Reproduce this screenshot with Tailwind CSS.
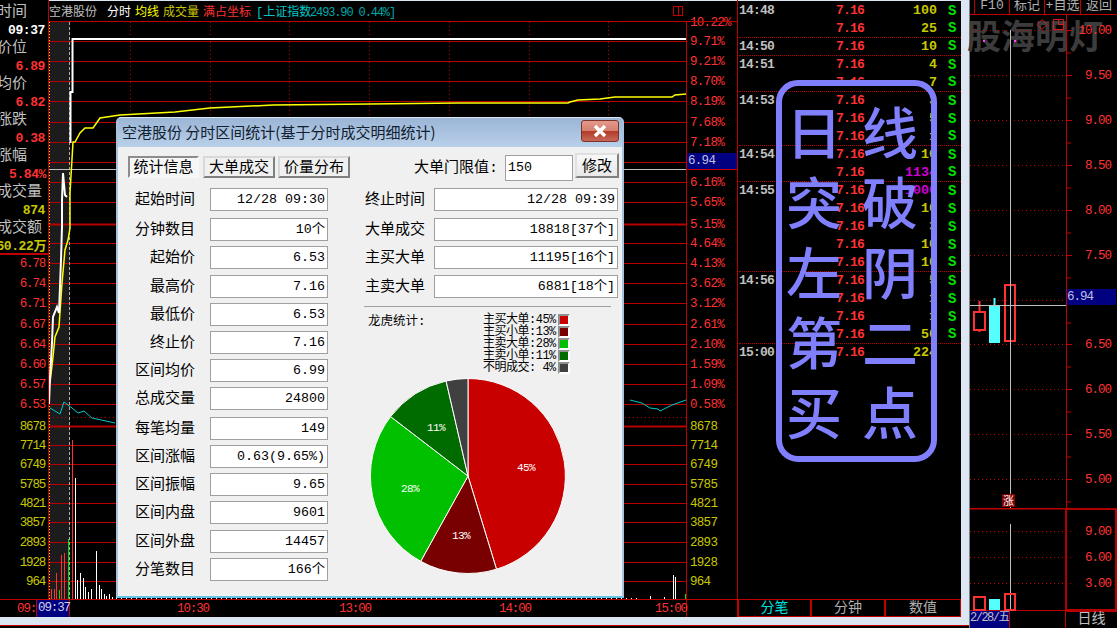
<!DOCTYPE html>
<html lang="zh">
<head>
  <meta charset="UTF-8" />
  <title>空港股份 分时区间统计</title>
  <script src="https://cdn.jsdelivr.net/npm/@tailwindcss/browser@4"></script>
</head>
<body class="relative w-[1117px] h-[628px] overflow-hidden flex bg-[#dce6f2] [font-family:'Liberation_Mono','Noto_Sans_CJK_SC',monospace]">

  <!-- left part: intraday chart + trade list -->
  <div class="w-[969px] h-[628px] flex flex-col">
    <div class="flex h-[617px] w-[961px]">
      <div class="grid grid-cols-[49px_637px_51px] grid-rows-[22px_577px_18px] w-[737px] bg-black">
        <!-- stats column -->
        <div class="row-span-2 border-r border-[#c00000] flex flex-col overflow-hidden">
          <div class="h-[255px] pt-[4px] border-b-2 border-[#c00000] text-[15px] leading-[18px] overflow-hidden">
            <div class="-ml-[3px] h-[18px] whitespace-nowrap text-[#c0c0c0]">时间</div>
            <div class="h-[18px] text-right pr-[3px] text-[13px] font-bold tracking-[-0.4px] text-white">09:37</div>
            <div class="-ml-[3px] h-[18px] whitespace-nowrap text-[#c0c0c0]">价位</div>
            <div class="h-[18px] text-right pr-[3px] text-[13px] font-bold tracking-[-0.4px] text-[#ff3232]">6.89</div>
            <div class="-ml-[3px] h-[18px] whitespace-nowrap text-[#c0c0c0]">均价</div>
            <div class="h-[18px] text-right pr-[3px] text-[13px] font-bold tracking-[-0.4px] text-[#ff3232]">6.82</div>
            <div class="-ml-[3px] h-[18px] whitespace-nowrap text-[#c0c0c0]">涨跌</div>
            <div class="h-[18px] text-right pr-[3px] text-[13px] font-bold tracking-[-0.4px] text-[#ff3232]">0.38</div>
            <div class="-ml-[3px] h-[18px] whitespace-nowrap text-[#c0c0c0]">涨幅</div>
            <div class="h-[18px] text-right pr-[2px] text-[13px] font-bold tracking-[-0.4px] text-[#ff3232]">5.84%</div>
            <div class="-ml-[3px] h-[18px] whitespace-nowrap text-[#c0c0c0]">成交量</div>
            <div class="h-[18px] text-right pr-[3px] text-[13px] font-bold tracking-[-0.4px] text-[#c8c800]">874</div>
            <div class="-ml-[3px] h-[18px] whitespace-nowrap text-[#c0c0c0]">成交额</div>
            <div class="h-[18px] flex justify-end pr-[2px] text-[13px] font-bold tracking-[-0.4px] text-[#c8c800] whitespace-nowrap">60.22万</div>
          </div>
          <svg id="leftAxis" class="block" width="48" height="344" viewBox="0 255 48 344"></svg>
        </div>

        <!-- info strip -->
        <div class="col-span-2 flex items-center border-t border-t-[#dce6f2] border-b border-b-[#c00000] pt-[3px] text-[12px] whitespace-nowrap relative">
          <span class="w-[58px] text-[#c0c0c0]">空港股份</span>
          <span class="w-[28px] text-white">分时</span>
          <span class="w-[28px] text-[#ffff00]">均线</span>
          <span class="w-[40px] text-[#c8c800]">成交量</span>
          <span class="w-[53px] text-[#ff3232]">满占坐标</span>
          <span class="w-[54px] text-[#00c8c8]">[上证指数</span>
          <span class="text-[#00a8a8] tracking-[-1.13px]">2493.90 0.44%]</span>
          <span class="ml-auto mr-[54px] -mt-[3px] w-[10px] h-[10px] border border-[#c00000] flex justify-center"><span class="w-px h-full bg-[#c00000]"></span></span>
        </div>

        <!-- price / volume canvas -->
        <svg id="chart" class="block" width="637" height="577" viewBox="49 22 637 577"></svg>
        <svg id="rightAxis" class="block overflow-visible" width="51" height="577" viewBox="686 22 51 577"></svg>

        <!-- time axis -->
        <svg class="col-span-3 block" width="737" height="18" viewBox="0 599 737 18" font-size="12.5" letter-spacing="-1.1" fill="#ff3232">
          <line x1="0" y1="599.5" x2="737" y2="599.5" stroke="#c00000" />
          <rect x="37" y="600" width="33" height="17" fill="#000080" />
          <line x1="36.5" y1="600" x2="36.5" y2="617" stroke="#c00000" />
          <line x1="69.5" y1="600" x2="69.5" y2="617" stroke="#c00000" />
          <line x1="686.5" y1="600" x2="686.5" y2="617" stroke="#c00000" />
          <text x="17" y="612">09:</text>
          <text x="38" y="611" fill="#d0d0e8">09:37</text>
          <text x="177" y="612">10:30</text>
          <text x="339" y="612">13:00</text>
          <text x="499" y="612">14:00</text>
          <text x="655" y="612">15:00</text>
        </svg>
      </div>

      <!-- trade list -->
      <div class="w-[224px] flex flex-col bg-black border-l border-[#c00000]">
        <div id="trades" class="h-[599px] pt-px pl-px border-t border-t-[#dce6f2] overflow-hidden"></div>
        <div class="h-[18px] flex text-[14px] leading-[16px] text-center border border-[#c00000]">
          <div class="w-[73px] border-r-2 border-[#c00000] text-[#00e0e0]">分笔</div>
          <div class="w-[74px] border-r-2 border-[#c00000] text-[#b0b0b0]">分钟</div>
          <div class="flex-1 text-[#b0b0b0]">数值</div>
        </div>
      </div>
    </div>
    <div class="mt-[8px] h-[3px] bg-black border-t border-[#c00000]"></div>
  </div>

  <!-- daily K panel -->
  <div class="relative w-[148px] h-[628px] bg-black border-l border-[#808080] flex flex-col">
    <div class="absolute left-[-3px] top-[12px] text-[34px] leading-[46px] font-bold text-[#3c3c3c] whitespace-nowrap font-['Noto_Sans_CJK_SC',sans-serif]">股海明灯</div>
    <div class="h-[15px] flex border-b border-[#c00000] text-[13px] leading-[11px] text-[#b0b0b0] text-center overflow-hidden">
      <div class="w-[5px] border-r border-[#c00000]"></div>
      <div class="w-[35px] border-r border-[#c00000]">F10</div>
      <div class="w-[35px] border-r border-[#c00000]">标记</div>
      <div class="w-[36px] border-r border-[#c00000] whitespace-nowrap">+自选</div>
      <div class="flex-1">返回</div>
    </div>
    <svg id="kline" class="relative block" width="147" height="493" viewBox="970 15 147 493"></svg>
    <svg class="block" width="147" height="103" viewBox="970 508 147 103" font-size="12.5" letter-spacing="-1" fill="#ff3232">
      <line x1="970" y1="508.5" x2="1117" y2="508.5" stroke="#c00000" stroke-width="2" />
      <rect x="1066" y="509" width="50" height="101" fill="none" stroke="#b00000" stroke-width="2" />
      <line x1="970" y1="610.5" x2="1066" y2="610.5" stroke="#c00000" />
      <path d="M970 531.5H1072M970 557.5H1072M970 583.5H1072" stroke="#c00000" stroke-dasharray="1 3" />
      <text x="1111" y="535" text-anchor="end">9.00</text>
      <text x="1111" y="561" text-anchor="end">6.00</text>
      <text x="1111" y="587" text-anchor="end">3.00</text>
      <line x1="1010.5" y1="524" x2="1010.5" y2="610" stroke="#c0c0c0" />
      <rect x="974" y="597" width="11" height="13" fill="none" stroke="#ff3232" stroke-width="2" />
      <rect x="989" y="599" width="11" height="11" fill="#55ffff" />
      <rect x="1005" y="594" width="10" height="16" fill="none" stroke="#ff3232" stroke-width="2" />
    </svg>
    <div class="h-[17px] flex text-[13px] leading-[15px] text-[#c0c0c0] whitespace-nowrap">
      <div class="w-[40px] bg-[#000080] border-r border-[#c00000] text-[12px] tracking-[-1.5px] overflow-hidden">2/28/五</div>
      <div class="w-[56px] border-r border-[#c00000]"></div>
      <div class="flex-1 text-center text-[14px] border-t border-[#c00000]">日线</div>
    </div>
  </div>

  <!-- hand-drawn note on top of the screen -->
  <div class="absolute left-[776px] top-[80px] w-[161px] h-[382px] border-[6px] border-[#8080ff] rounded-[22px] pt-[9px] pl-[2px] grid grid-cols-[60px_60px] grid-rows-[repeat(5,70px)] gap-x-[16px] text-[#8080ff] text-[56px] leading-[70px] text-center font-medium font-['Noto_Sans_CJK_SC',sans-serif]">
    <span>日</span><span>线</span>
    <span>突</span><span>破</span>
    <span>左</span><span>阴</span>
    <span>第</span><span>二</span>
    <span>买</span><span>点</span>
  </div>

  <!-- stats dialog -->
  <div class="absolute left-[116px] top-[117px] w-[508px] h-[481px] flex flex-col rounded-t-[5px] border-x-2 border-b-2 border-t border-x-[#a9c3de] border-b-[#62c4e6] border-t-[#d8e6f2] bg-[#f0f0f0] text-[15px] text-black">
    <div class="h-[29px] shrink-0 flex items-center justify-between pl-[4px] pr-[3px] bg-[linear-gradient(#9bb5d6,#b9d0e9)] text-[#10202f] font-['Noto_Sans_CJK_SC',sans-serif]">
      <span class="whitespace-nowrap">空港股份 分时区间统计(基于分时成交明细统计)</span>
      <span class="w-[38px] h-[22px] -mt-[3px] flex items-center justify-center rounded-[3px] border border-[#7d3328] bg-[linear-gradient(#e39a8c_0%,#d4816f_48%,#b23c28_52%,#c8685a_100%)]">
        <svg width="16" height="14" viewBox="0 0 16 14"><path d="M3 2l10 10M13 2L3 12" stroke="#fff" stroke-width="3.4" /></svg>
      </span>
    </div>

    <div class="flex-1 flex flex-col bg-[#f0f0f0]">
      <!-- tabs + threshold -->
      <div class="h-[28px] mt-[6px] flex pl-[10px] pr-[3px]">
        <div class="w-[71px] h-[22px] mt-[3px] pt-[4px] flex items-center justify-center border-2 border-[#f8f8f8] border-t-[#8c8c8c] border-l-[#8c8c8c] bg-[#f6f6f6]">统计信息</div>
        <div class="w-[72px] h-[22px] mt-[3px] pt-[4px] ml-[4px] flex items-center justify-center border-2 border-[#d8d8d8] border-r-[#808080] border-b-[#808080] bg-[#f0f0f0]">大单成交</div>
        <div class="w-[72px] h-[22px] mt-[3px] pt-[4px] ml-[3px] flex items-center justify-center border-2 border-[#d8d8d8] border-r-[#808080] border-b-[#808080] bg-[#f0f0f0]">价量分布</div>
        <div class="ml-auto h-[26px] mt-[2px] pt-[3px] flex items-center whitespace-nowrap">大单门限值:</div>
        <div class="w-[68px] h-[26px] mt-[2px] ml-[7px] px-[2px] flex items-center border border-[#a0a0a0] bg-white text-[13.33px]">150</div>
        <div class="w-[44px] h-[25px] ml-[2px] pt-[5px] flex items-center justify-center border-2 border-[#e0e0e0] border-r-[#808080] border-b-[#808080] bg-[linear-gradient(#f8f8f8,#e8e8e8)]">修改</div>
      </div>

      <div class="flex mt-[7px]">
        <!-- left fields -->
        <div class="w-[210px] flex flex-col gap-[5px] text-right">
          <div class="flex items-center h-[23px]"><span class="w-[77px] mt-[4px]">起始时间</span><span class="w-[118px] h-[23px] ml-[15px] pr-[2px] border border-[#a0a0a0] bg-white text-[13.33px] leading-[21px] whitespace-nowrap">12/28 09:30</span></div>
          <div class="flex items-center h-[23px] mt-[2px]"><span class="w-[77px] mt-[4px]">分钟数目</span><span class="w-[118px] h-[23px] ml-[15px] pr-[2px] border border-[#a0a0a0] bg-white text-[13.33px] leading-[21px] whitespace-nowrap">10个</span></div>
          <div class="flex items-center h-[23px]"><span class="w-[77px] mt-[4px]">起始价</span><span class="w-[118px] h-[23px] ml-[15px] pr-[2px] border border-[#a0a0a0] bg-white text-[13.33px] leading-[21px] whitespace-nowrap">6.53</span></div>
          <div class="flex items-center h-[23px] mt-[1px]"><span class="w-[77px] mt-[4px]">最高价</span><span class="w-[118px] h-[23px] ml-[15px] pr-[2px] border border-[#a0a0a0] bg-white text-[13.33px] leading-[21px] whitespace-nowrap">7.16</span></div>
          <div class="flex items-center h-[23px]"><span class="w-[77px] mt-[4px]">最低价</span><span class="w-[118px] h-[23px] ml-[15px] pr-[2px] border border-[#a0a0a0] bg-white text-[13.33px] leading-[21px] whitespace-nowrap">6.53</span></div>
          <div class="flex items-center h-[23px]"><span class="w-[77px] mt-[4px]">终止价</span><span class="w-[118px] h-[23px] ml-[15px] pr-[2px] border border-[#a0a0a0] bg-white text-[13.33px] leading-[21px] whitespace-nowrap">7.16</span></div>
          <div class="flex items-center h-[23px]"><span class="w-[77px] mt-[4px]">区间均价</span><span class="w-[118px] h-[23px] ml-[15px] pr-[2px] border border-[#a0a0a0] bg-white text-[13.33px] leading-[21px] whitespace-nowrap">6.99</span></div>
          <div class="flex items-center h-[23px]"><span class="w-[77px] mt-[4px]">总成交量</span><span class="w-[118px] h-[23px] ml-[15px] pr-[2px] border border-[#a0a0a0] bg-white text-[13.33px] leading-[21px] whitespace-nowrap">24800</span></div>
          <div class="flex items-center h-[23px] mt-[2px]"><span class="w-[77px] mt-[4px]">每笔均量</span><span class="w-[118px] h-[23px] ml-[15px] pr-[2px] border border-[#a0a0a0] bg-white text-[13.33px] leading-[21px] whitespace-nowrap">149</span></div>
          <div class="flex items-center h-[23px]"><span class="w-[77px] mt-[4px]">区间涨幅</span><span class="w-[118px] h-[23px] ml-[15px] pr-[2px] border border-[#a0a0a0] bg-white text-[13.33px] leading-[21px] whitespace-nowrap">0.63(9.65%)</span></div>
          <div class="flex items-center h-[23px]"><span class="w-[77px] mt-[4px]">区间振幅</span><span class="w-[118px] h-[23px] ml-[15px] pr-[2px] border border-[#a0a0a0] bg-white text-[13.33px] leading-[21px] whitespace-nowrap">9.65</span></div>
          <div class="flex items-center h-[23px]"><span class="w-[77px] mt-[4px]">区间内盘</span><span class="w-[118px] h-[23px] ml-[15px] pr-[2px] border border-[#a0a0a0] bg-white text-[13.33px] leading-[21px] whitespace-nowrap">9601</span></div>
          <div class="flex items-center h-[23px] mt-[1px]"><span class="w-[77px] mt-[4px]">区间外盘</span><span class="w-[118px] h-[23px] ml-[15px] pr-[2px] border border-[#a0a0a0] bg-white text-[13.33px] leading-[21px] whitespace-nowrap">14457</span></div>
          <div class="flex items-center h-[23px]"><span class="w-[77px] mt-[4px]">分笔数目</span><span class="w-[118px] h-[23px] ml-[15px] pr-[2px] border border-[#a0a0a0] bg-white text-[13.33px] leading-[21px] whitespace-nowrap">166个</span></div>
        </div>

        <!-- right fields, legend, pie -->
        <div class="ml-[37px] w-[253px] flex flex-col">
          <div class="flex flex-col gap-[5px]">
            <div class="flex items-center h-[23px]"><span class="w-[58px] mt-[4px] whitespace-nowrap">终止时间</span><span class="w-[184px] h-[23px] ml-[11px] pr-[2px] text-right border border-[#a0a0a0] bg-white text-[13.33px] leading-[21px]">12/28 09:39</span></div>
            <div class="flex items-center h-[23px] mt-[2px]"><span class="w-[58px] mt-[4px] whitespace-nowrap">大单成交</span><span class="w-[184px] h-[23px] ml-[11px] pr-[2px] text-right border border-[#a0a0a0] bg-white text-[13.33px] leading-[21px]">18818[37个]</span></div>
            <div class="flex items-center h-[23px]"><span class="w-[58px] mt-[4px] whitespace-nowrap">主买大单</span><span class="w-[184px] h-[23px] ml-[11px] pr-[2px] text-right border border-[#a0a0a0] bg-white text-[13.33px] leading-[21px]">11195[16个]</span></div>
            <div class="flex items-center h-[23px] mt-[1px]"><span class="w-[58px] mt-[4px] whitespace-nowrap">主卖大单</span><span class="w-[184px] h-[23px] ml-[11px] pr-[2px] text-right border border-[#a0a0a0] bg-white text-[13.33px] leading-[21px]">6881[18个]</span></div>
          </div>
          <div class="w-[247px] -ml-[1px] mt-[8px] border-t border-[#a0a0a0]"></div>
          <div class="flex mt-[7px] h-[60px]">
            <div class="ml-[3px] w-[115px] mt-[1px] text-[12.5px] leading-[15px]">龙虎统计:</div>
            <div class="flex flex-col text-[12px] leading-[12px] tracking-[-0.5px] whitespace-nowrap">
              <div class="flex h-[12px]"><span class="w-[75px]">主买大单:45%</span><span class="w-[12px] h-[12px] border-2 border-white border-t-[#909090] border-l-[#909090] bg-[#c80000]"></span></div>
              <div class="flex h-[12px]"><span class="w-[75px]">主买小单:13%</span><span class="w-[12px] h-[12px] border-2 border-white border-t-[#909090] border-l-[#909090] bg-[#780000]"></span></div>
              <div class="flex h-[12px]"><span class="w-[75px]">主卖大单:28%</span><span class="w-[12px] h-[12px] border-2 border-white border-t-[#909090] border-l-[#909090] bg-[#00c000]"></span></div>
              <div class="flex h-[12px]"><span class="w-[75px]">主卖小单:11%</span><span class="w-[12px] h-[12px] border-2 border-white border-t-[#909090] border-l-[#909090] bg-[#006c00]"></span></div>
              <div class="flex h-[12px]"><span class="w-[75px]">不明成交: 4%</span><span class="w-[12px] h-[12px] border-2 border-white border-t-[#909090] border-l-[#909090] bg-[#404040]"></span></div>
            </div>
          </div>
          <svg class="block mt-[2px] ml-[3px]" width="200" height="200" viewBox="369 375 200 200" font-size="11" letter-spacing="-0.6" fill="#fff" text-anchor="middle">
            <g stroke="#fff" stroke-width="1">
              <path d="M469 475V377.5A97.5 97.5 0 0 1 497.5 568.2Z" fill="#c80000" />
              <path d="M469 475L497.5 568.2A97.5 97.5 0 0 1 421.7 560.3Z" fill="#780000" />
              <path d="M469 475L421.7 560.3A97.5 97.5 0 0 1 391.6 415.6Z" fill="#00c000" />
              <path d="M469 475L391.6 415.6A97.5 97.5 0 0 1 447.1 380Z" fill="#006c00" />
              <path d="M469 475L447.1 380A97.5 97.5 0 0 1 469 377.5Z" fill="#404040" />
            </g>
            <text x="527" y="470">45%</text>
            <text x="462" y="538">13%</text>
            <text x="411" y="491">28%</text>
            <text x="437" y="430">11%</text>
          </svg>
        </div>
      </div>
    </div>
  </div>

  <script>
    const DARK = '#c00000', RED = '#ff3232', YEL = '#c8c800';
    const line = (x1, y1, x2, y2, c, w = 1, extra = '') => `<line x1="${x1}" y1="${y1}" x2="${x2}" y2="${y2}" stroke="${c}" stroke-width="${w}" ${extra}/>`;
    const poly = (pts, c, w) => `<polyline points="${pts}" fill="none" stroke="${c}" stroke-width="${w}"/>`;
    const txt = (x, y, s, c, a = 'start') => `<text x="${x}" y="${y}" fill="${c}" text-anchor="${a}" dominant-baseline="central">${s}</text>`;

    // price and volume grid, page coordinates
    const pctY = [41, 61, 81, 101, 122, 142, 162, 182, 202, 224, 243, 263, 283, 303, 324, 344, 364, 384, 404];
    const volY = [426, 445, 464, 484, 503, 522, 542, 562, 581];
    let c = '<rect x="49" y="22" width="21" height="577" fill="#1c1c1c"/>';
    pctY.concat(volY).forEach(y => {
      const thick = y === 224 || y === 426;
      c += line(49, y + .5, 686, y + .5, '#b80000', thick ? 2 : 1);
    });
    c += line(49, 417.5, 686, 417.5, DARK, 1, 'stroke-dasharray="1 3"');
    [130, 210, 289, 369, 449, 529, 608].forEach(x => c += line(x + .5, 22, x + .5, 130, DARK, 1, 'stroke-dasharray="1 3"'));
    c += line(49.5, 22, 49.5, 599, '#ffd000', 1, 'stroke-dasharray="1 2"');
    c += line(69.5, 22, 69.5, 599, '#b0b0b0', 1, 'stroke-dasharray="3 2"');
    c += line(49, 169.5, 686, 169.5, '#c0c0c0');

    // volume bars
    [[51, 589, 1], [54, 589, 1], [56, 573, 1], [61, 555, 1], [64, 553, 1], [72, 440, 1]].forEach(b => c += line(b[0] + .5, b[1], b[0] + .5, 599, RED));
    [[59, 590], [68, 539]].forEach(b => c += line(b[0] + .5, b[1], b[0] + .5, 599, '#00e000'));
    [[75, 478], [77, 580], [80, 573], [83, 578], [85, 587], [88, 592], [91, 589], [96, 551], [99, 585], [101, 589], [104, 594], [106, 596], [109, 594], [112, 597], [673, 575], [675, 577], [664, 597], [650, 596]].forEach(b => c += line(b[0] + .5, b[1], b[0] + .5, 599, '#fff'));
    c += line(116, 598.5, 640, 598.5, '#fff', 1, 'stroke-dasharray="1 4"');
    c += line(685.5, 594, 685.5, 599, '#00e000');

    // average, price and index lines
    c += poly('50,383 53,357 55,337 59,327 62,283 65,250 68,240 70,228 70,193 73,142 75,142 80,133 85,128 93,128 100,118 120,115 175,112 210,108 273,105 370,104 459,103 568,103 570,102 578,100 600,99 615,97 672,97 675,95 686,94', '#ffff00', 1.5);
    c += poly('49,404 50,377 52,343 53,317 57,307 59,313 61,260 62,227 62,200 63,173 65,195 67,197', '#fff', 2);
    c += poly('70.5,143 70.5,92 72.5,92 72.5,39 686,39', '#fff', 2);
    c += poly('50,408 60,414 64,402 72,408 78,413 84,411 92,418 115,423', '#00c8c8', 1);
    c += poly('630,400 642,403 650,408 658,409 660,411 672,405 686,400', '#00c8c8', 1);
    document.getElementById('chart').innerHTML = c;

    // right axis
    const pctL = ['9.71', '9.21', '8.70', '8.19', '7.68', '7.18', '', '6.16', '5.65', '5.15', '4.64', '4.13', '3.62', '3.12', '2.61', '2.10', '1.59', '1.09', '0.58'];
    const volL = ['8678', '7714', '6749', '5785', '4821', '3857', '2893', '1928', '964'];
    let r = `<g font-size="12.5" letter-spacing="-0.7">` + line(686.5, 22, 686.5, 599, DARK);
    r += txt(690, 23, '10.22%', RED);
    pctY.forEach((y, i) => { if (pctL[i]) r += txt(690, y + 1, pctL[i] + '%', RED); });
    volY.forEach((y, i) => r += txt(690, y + 1, volL[i], YEL));
    r += '<rect x="687" y="153" width="50" height="17" fill="#000080"/>' + line(687, 169.5, 737, 169.5, DARK);
    r += txt(688, 161, '6.94', '#c0c0e0') + '</g>';
    document.getElementById('rightAxis').innerHTML = r;

    // left axis
    const leftL = ['6.78', '6.74', '6.71', '6.67', '6.64', '6.60', '6.57', '6.53'];
    let l = '<g font-size="12.5" letter-spacing="-1.2">';
    [263, 283, 303, 324, 344, 364, 384, 404].forEach((y, i) => l += txt(45, y + 1, leftL[i], RED, 'end'));
    volY.forEach((y, i) => l += txt(45, y + 1, volL[i], YEL, 'end'));
    document.getElementById('leftAxis').innerHTML = l + '</g>';

    // trade rows: [time, volume, separator below]
    const rows = [['14:48', '100', 0], ['', '25', 1], ['14:50', '10', 1], ['14:51', '4', 0], ['', '7', 1], ['14:53', '3', 0], ['', '5', 0], ['', '1', 1], ['14:54', '10', 0], ['', '1134', 1], ['14:55', '1000', 0], ['', '10', 0], ['', '3', 0], ['', '10', 0], ['', '10', 1], ['14:56', '5', 0], ['', '1', 0], ['', '1', 0], ['', '50', 1], ['15:00', '224', 0]];
    document.getElementById('trades').innerHTML = rows.map((t, i) => {
      const big = t[1].length > 3;
      return `<div class="flex items-center h-[18px] whitespace-nowrap font-bold ${t[2] ? 'border-b border-dotted border-[#c00000]' : ''}">
        <span class="w-[97px] text-[13px] tracking-[-0.8px] text-[#c0c0c0]">${t[0]}</span>
        <span class="w-[30px] text-[13px] tracking-[-0.8px] text-[#ff3232]">7.16</span>
        <span class="w-[71px] text-right text-[13.33px] ${big ? 'text-[#d000d0]' : 'text-[#c8c800]'}">${t[1]}</span>
        <span class="ml-[11px] text-[14px] text-[#00e000]">${i < 19 ? 'S' : ''}</span>
      </div>`;
    }).join('');

    // daily candles
    let k = '<g font-size="12.5" letter-spacing="-1">';
    [30, 75, 120, 165, 210, 255, 300, 344, 389, 434, 479].forEach((y, i) => {
      k += line(970, y + .5, 1066, y + .5, DARK, 1, 'stroke-dasharray="1 3"');
      k += line(1066, y + .5, 1072, y + .5, DARK);
      k += line(1066, y + 23, 1071, y + 23, DARK);
      const lab = ['10.00', '9.50', '9.00', '8.50', '8.00', '7.50', '', '6.50', '6.00', '5.50', '5.00'][i];
      if (lab) k += txt(1111, y + 1, lab, RED, 'end');
    });
    k += line(1066.5, 15, 1066.5, 508, '#c00000');
    k += '<rect x="1067" y="289" width="49" height="16" fill="#000080"/>' + txt(1067, 297, '6.94', '#c0c0e0');
    k += line(979.5, 301, 979.5, 332, RED, 2) + '<rect x="974" y="312" width="11" height="18" fill="#000" stroke="#ff3232" stroke-width="2"/>';
    k += line(994.5, 298, 994.5, 343, '#55ffff', 2) + '<rect x="989" y="305" width="11" height="38" fill="#55ffff"/>';
    k += '<rect x="1005" y="285" width="10" height="56" fill="none" stroke="#ff3232" stroke-width="2"/>';
    k += line(970, 305.5, 1066, 305.5, '#c0c0c0') + line(1010.5, 30, 1010.5, 508, '#c0c0c0');
    k += '<rect x="983" y="40" width="2" height="2" fill="#ff40ff"/><rect x="1014" y="40" width="2" height="2" fill="#ff40ff"/>';
    k += '<path d="M1042 19.5l5 5-5 5-5-5zM1053.5 19.5h10v10h-10zM1058.5 19.5v5h5" fill="none" stroke="#d02020"/>';
    k += '<rect x="1002" y="494" width="13" height="13" fill="#800000"/><text x="1008.5" y="505" font-size="11" letter-spacing="0" text-anchor="middle" fill="#fff">涨</text>';
    document.getElementById('kline').innerHTML = k + '</g>';
  </script>
</body>
</html>
